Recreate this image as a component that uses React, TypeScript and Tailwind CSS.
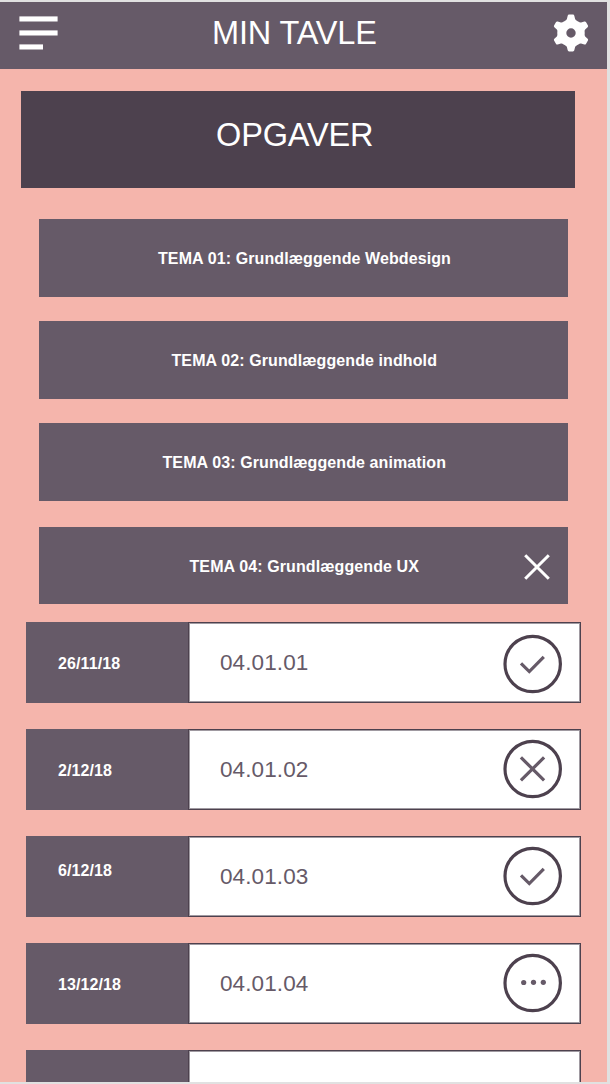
type Status = 'done' | 'missed' | 'pending';

const themes = [
  { title: 'TEMA 01: Grundlæggende Webdesign', open: false, box: 'mb-[24.5px] pl-[119px] pt-[2px]' },
  { title: 'TEMA 02: Grundlæggende indhold', open: false, box: 'mb-[24.5px] pl-[132.5px] pt-[2px]' },
  { title: 'TEMA 03: Grundlæggende animation', open: false, box: 'mb-[26px] pl-[123.5px] pt-[2px]' },
  { title: 'TEMA 04: Grundlæggende UX', open: true, box: 'mb-[18px] pl-[150.5px] pt-[3px]' },
];

const tasks: { date: string; name: string; status?: Status; dateBox: string; iconBox: string }[] = [
  { date: '26/11/18', name: '04.01.01', status: 'done', dateBox: 'pt-[32px]', iconBox: 'pt-[12.3px]' },
  { date: '2/12/18', name: '04.01.02', status: 'missed', dateBox: 'pt-[32px]', iconBox: 'pt-[10.4px]' },
  { date: '6/12/18', name: '04.01.03', status: 'done', dateBox: 'pt-[25px]', iconBox: 'pt-[10px]' },
  { date: '13/12/18', name: '04.01.04', status: 'pending', dateBox: 'pt-[32px]', iconBox: 'pt-[10px]' },
  { date: '', name: '', dateBox: '', iconBox: '' },
];

function StatusIcon({ status }: { status: Status }) {
  return (
    <svg width="60" height="60" viewBox="0 0 60 60" fill="none">
      <circle cx="29.7" cy="30" r="27.7" stroke="#4d414e" strokeWidth="3.2" />
      {status === 'done' && <path d="M18 29.3 L26.3 37.6 L40.8 22.8" stroke="#665a68" strokeWidth="3.2" />}
      {status === 'missed' && <path d="M17.9 18.4 L41.1 41.4 M41.1 18.4 L17.9 41.4" stroke="#665a68" strokeWidth="3.2" />}
      {status === 'pending' && (
        <g fill="#665a68">
          <circle cx="20.7" cy="29.5" r="2.6" />
          <circle cx="30.5" cy="29.3" r="2.6" />
          <circle cx="40.3" cy="29.3" r="2.6" />
        </g>
      )}
    </svg>
  );
}

function Gear() {
  return (
    <svg width="38" height="38" viewBox="-19 -19 38 38" fill="#fff">
      {[0, 60, 120, 180, 240, 300].map((a) => (
        <path
          key={a}
          transform={`rotate(${a})`}
          d="M-6.8 -11.8 Q-4.5 -12.7 -4.1 -14 L-3.3 -17.3 Q-3 -18.4 -2 -18.4 L2 -18.4 Q3 -18.4 3.3 -17.3 L4.1 -14 Q4.5 -12.7 6.8 -11.8 L2.6 -5.5 L-2.6 -5.5 Z"
        />
      ))}
      <circle r="9" fill="none" stroke="#fff" strokeWidth="8.6" />
    </svg>
  );
}

export default function App() {
  return (
    <div className="h-[1084px] w-[610px] overflow-hidden bg-[#e1e1e1] py-[2px] pr-[3px] font-['Liberation_Sans',Arial,sans-serif]">
      <div className="h-[1080px] overflow-hidden bg-[#f5b5ac]">
        <header className="flex h-[67px] items-start bg-[#665a68] pl-[19px] pr-[17px] text-white">
          <svg className="mt-[14px]" width="40" height="36" fill="#fff">
            <rect x="0.4" y="0.4" width="38.2" height="5.1" />
            <rect x="0.4" y="14.4" width="38.2" height="5.1" />
            <rect x="0.4" y="28.4" width="23.6" height="5.1" />
          </svg>
          <h1 className="ml-[153px] mt-[13px] whitespace-nowrap text-[32.5px] leading-[36px] tracking-[-0.15px]">MIN TAVLE</h1>
          <div className="ml-auto mt-[12px]">
            <Gear />
          </div>
        </header>

        <h2 className="ml-[21px] mt-[22px] h-[97px] w-[554px] bg-[#4d414e] pl-[195px] pt-[26px] text-[32.5px] leading-[36px] tracking-[-0.15px] text-white">
          OPGAVER
        </h2>

        <section className="ml-[39px] mt-[31px] w-[529.3px]">
          {themes.map((t) => (
            <div key={t.title} className={`flex h-[77.5px] items-center justify-between bg-[#665a68] pr-[18px] text-white ${t.box}`}>
              <span className="whitespace-nowrap text-[16px] font-bold leading-[20px] tracking-[0.1px]">{t.title}</span>
              {t.open && (
                <svg width="26" height="26" viewBox="0 0 26 26" stroke="#fff" strokeWidth="3">
                  <path d="M1.2 1.2 L24.8 24.8 M24.8 1.2 L1.2 24.8" />
                </svg>
              )}
            </div>
          ))}
        </section>

        <section className="ml-[26px] flex w-[555px] flex-col gap-[26px]">
          {tasks.map((t, i) => (
            <div key={i} className="flex h-[81px] shrink-0">
              <div className={`w-[162px] bg-[#665a68] pl-[32px] text-[16px] font-bold leading-[20px] tracking-[0.1px] text-white ${t.dateBox}`}>
                {t.date}
              </div>
              <div className="flex flex-1 justify-between border border-[#4d414e] bg-white pl-[31px] pr-[17px] shadow-[inset_0_0_0_1px_#a09aa1]">
                <span className="pt-[25px] text-[22.5px] leading-[30px] tracking-[0.1px] text-[#665a68]">{t.name}</span>
                {t.status && (
                  <span className={`-mt-px ${t.iconBox}`}>
                    <StatusIcon status={t.status} />
                  </span>
                )}
              </div>
            </div>
          ))}
        </section>
      </div>
    </div>
  );
}
